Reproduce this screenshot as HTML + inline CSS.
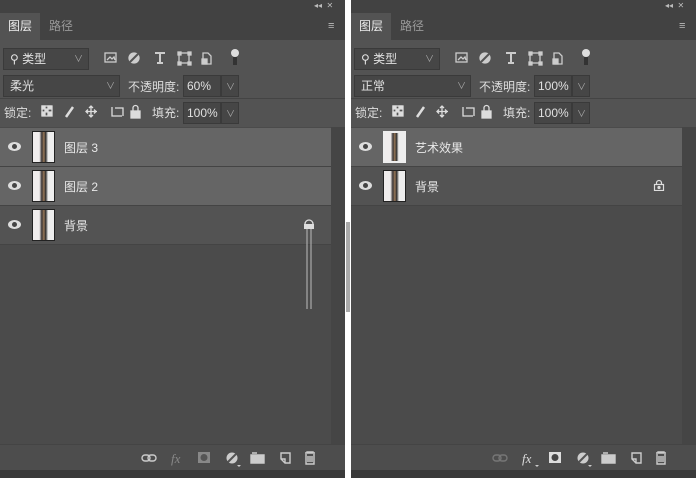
<!DOCTYPE html><html><head><meta charset="utf-8"><style>
*{margin:0;padding:0;box-sizing:border-box}
body{width:696px;height:478px;background:#3c3c3c;position:relative;overflow:hidden;font-family:"Liberation Sans","Noto Sans CJK SC",sans-serif;font-size:12px;color:#ddd}
.p{position:absolute;top:0;width:345px;height:478px;background:#535353}
.a{position:absolute}
.top{left:0;top:0;width:345px;height:13px;background:#424242}
.tabs{left:0;top:13px;width:345px;height:27px;background:#424242}
.tab{top:13px;height:27px;line-height:27px;padding:0 8px}
.box{background:#464646;border:1px solid #3a3a3a;height:22px;line-height:20px;padding-left:6px;color:#e0e0e0}
.chev{color:#aaa;font-size:9px}
.list{left:0;top:127px;width:331px;height:317px;background:#4b4b4b}
.sb{left:331px;top:127px;width:14px;height:317px;background:#454545}
.row{left:0;width:331px;height:39px;border-bottom:1px solid #444}
.sel{background:#656565}
.norm{background:#535353}
.eye{left:8px;top:14px;width:13px;height:9px;border-radius:50%;background:#ddd}
.eye:after{content:"";position:absolute;left:4px;top:2px;width:5px;height:5px;border-radius:50%;background:#444}
.th{left:32px;top:3px;width:23px;height:32px;background:linear-gradient(90deg,#f0eded 30%,#3a3535 42%,#9a7a5a 52%,#2a2a2a 60%,#eee 72%);border:1px solid #222}
.nm{left:64px;top:11px;color:#e8e8e8;font-size:12px}
.bot{left:0;top:444px;width:345px;height:26px;background:#4d4d4d;border-top:1px solid #444}
.bl{left:0;top:470px;width:345px;height:8px;background:#3a3a3a}
svg{position:absolute}
</style></head><body>

<!-- LEFT -->
<div class="p" style="left:0">
<div class="a top"></div><div class="a" style="left:314px;top:1px;color:#bbb;font-size:8px">◂◂ &nbsp;✕</div>
<div class="a tabs"></div>
<div class="a tab" style="left:0;width:40px;background:#535353;color:#eee">图层</div>
<div class="a tab" style="left:41px;color:#999">路径</div>
<div class="a" style="left:328px;top:20px;color:#bbb;font-size:11px">≡</div>
<div class="a box" style="left:3px;top:48px;width:86px">⚲ 类型<span class="a chev" style="left:70px">∨</span></div>
<svg style="left:100px;top:48px" width="145" height="20" fill="none" stroke="#ccc" stroke-width="1.3">
<rect x="5" y="5" width="11" height="9"/><path d="M7 12l3-3 2 2 2-2 1 3" />
<circle cx="34" cy="10" r="5" fill="#ccc"/><path d="M30 14l8-8" stroke="#535353" stroke-width="2"/>
<path d="M55 5h10M60 5v10M57 15h6" stroke-width="2"/>
<rect x="79" y="5" width="10" height="10"/><rect x="78" y="4" width="3" height="3" fill="#ccc"/><rect x="88" y="4" width="3" height="3" fill="#ccc"/><rect x="78" y="14" width="3" height="3" fill="#ccc"/><rect x="88" y="14" width="3" height="3" fill="#ccc"/>
<path d="M103 5h5l3 3v8h-8z"/><rect x="102" y="11" width="5" height="5" fill="#ccc"/>
<circle cx="135" cy="5" r="4" fill="#ddd" stroke="none"/><rect x="133" y="9" width="4" height="8" fill="#333" stroke="none"/>
</svg>
<div class="a box" style="left:3px;top:75px;width:117px">柔光<span class="a chev" style="left:102px">∨</span></div>
<div class="a" style="left:128px;top:78px">不透明度:</div>
<div class="a box" style="left:183px;top:75px;width:38px;padding-left:3px">60%</div>
<div class="a box" style="left:221px;top:75px;width:18px;padding-left:4px"><span class="chev">∨</span></div>
<div class="a" style="left:0;top:98px;width:345px;height:1px;background:#444"></div>
<div class="a" style="left:4px;top:104px">锁定:</div>
<svg style="left:30px;top:103px" width="120" height="20" fill="none" stroke="#ddd" stroke-width="1.3">
<rect x="12" y="3" width="10" height="10"/><path d="M12 3h3v3h-3zM18 3h3v3h-3zM15 6h3v3h-3zM12 9h3v3h-3zM18 9h3v3h-3z" fill="#ddd"/>
<path d="M36 14l7-10" stroke-width="2.5"/>
<path d="M61 3v11M56 8.5h11M59 5l2-2 2 2M59 12l2 2 2-2M58 6.5l-2 2 2 2M64 6.5l2 2-2 2"/>
<path d="M82 4v9h10M85 5h8v8"/>
<rect x="101" y="8" width="9" height="7" fill="#ddd"/><path d="M103 8V5a2.5 2.5 0 015 0v3"/>
</svg>
<div class="a" style="left:152px;top:104px">填充:</div>
<div class="a box" style="left:183px;top:102px;width:38px;padding-left:3px">100%</div>
<div class="a box" style="left:221px;top:102px;width:18px;padding-left:4px"><span class="chev">∨</span></div>
<div class="a list"></div><div class="a sb"></div>
<div class="a row sel" style="top:128px"><div class="a eye"></div><div class="a th"></div><div class="a nm">图层 3</div></div>
<div class="a row sel" style="top:167px"><div class="a eye"></div><div class="a th"></div><div class="a nm">图层 2</div></div>
<div class="a row norm" style="top:206px"><div class="a eye"></div><div class="a th"></div><div class="a nm">背景</div></div>
<svg style="left:302px;top:218px" width="14" height="92"><path d="M3 6a4 4 0 018 0" stroke="#ddd" fill="none" stroke-width="1.3"/><rect x="2" y="6" width="10" height="5" fill="#ddd"/><rect x="4" y="11" width="2" height="80" fill="#aaa" opacity=".6"/><rect x="8" y="11" width="2" height="80" fill="#aaa" opacity=".6"/></svg>
<div class="a bot"></div><div class="a bl"></div>
<svg style="left:138px;top:448px" width="190" height="20" fill="none" stroke="#ccc" stroke-width="1.4">
<rect x="4" y="7" width="8" height="6" rx="3"/><rect x="10" y="7" width="8" height="6" rx="3"/>
<text x="33" y="15" fill="#888" stroke="none" font-size="13" font-style="italic" font-family="Liberation Serif">fx</text>
<rect x="60" y="4" width="12" height="11" fill="#888" stroke="none"/><circle cx="66" cy="9.5" r="3.5" fill="#555" stroke="none"/>
<circle cx="94" cy="10" r="5.5" fill="#ccc" stroke="none"/><path d="M90 14l8-8" stroke="#535353" stroke-width="2"/><path d="M99 17l2 2 2-2z" fill="#ccc" stroke="none"/>
<path d="M114 5h5M113 7h13v8h-13z" fill="#ccc"/>
<path d="M143 5h9v10h-5l-4-4z"/><path d="M143 11h4v4"/>
<path d="M167 5h10M169 5v-1h6v1M168 6v10h8V6M170 8v6M172 8v6M174 8v6"/>
</svg>
</div>

<div class="a" style="left:345px;top:0;width:6px;height:478px;background:#fff"></div>
<div class="a" style="left:346px;top:222px;width:4px;height:90px;background:#aaa"></div>

<!-- RIGHT -->
<div class="p" style="left:351px">
<div class="a top"></div><div class="a" style="left:314px;top:1px;color:#bbb;font-size:8px">◂◂ &nbsp;✕</div>
<div class="a tabs"></div>
<div class="a tab" style="left:0;width:40px;background:#535353;color:#eee">图层</div>
<div class="a tab" style="left:41px;color:#999">路径</div>
<div class="a" style="left:328px;top:20px;color:#bbb;font-size:11px">≡</div>
<div class="a box" style="left:3px;top:48px;width:86px">⚲ 类型<span class="a chev" style="left:70px">∨</span></div>
<svg style="left:100px;top:48px" width="145" height="20" fill="none" stroke="#ccc" stroke-width="1.3">
<rect x="5" y="5" width="11" height="9"/><path d="M7 12l3-3 2 2 2-2 1 3" />
<circle cx="34" cy="10" r="5" fill="#ccc"/><path d="M30 14l8-8" stroke="#535353" stroke-width="2"/>
<path d="M55 5h10M60 5v10M57 15h6" stroke-width="2"/>
<rect x="79" y="5" width="10" height="10"/><rect x="78" y="4" width="3" height="3" fill="#ccc"/><rect x="88" y="4" width="3" height="3" fill="#ccc"/><rect x="78" y="14" width="3" height="3" fill="#ccc"/><rect x="88" y="14" width="3" height="3" fill="#ccc"/>
<path d="M103 5h5l3 3v8h-8z"/><rect x="102" y="11" width="5" height="5" fill="#ccc"/>
<circle cx="135" cy="5" r="4" fill="#ddd" stroke="none"/><rect x="133" y="9" width="4" height="8" fill="#333" stroke="none"/>
</svg>
<div class="a box" style="left:3px;top:75px;width:117px">正常<span class="a chev" style="left:102px">∨</span></div>
<div class="a" style="left:128px;top:78px">不透明度:</div>
<div class="a box" style="left:183px;top:75px;width:38px;padding-left:3px">100%</div>
<div class="a box" style="left:221px;top:75px;width:18px;padding-left:4px"><span class="chev">∨</span></div>
<div class="a" style="left:0;top:98px;width:345px;height:1px;background:#444"></div>
<div class="a" style="left:4px;top:104px">锁定:</div>
<svg style="left:30px;top:103px" width="120" height="20" fill="none" stroke="#ddd" stroke-width="1.3">
<rect x="12" y="3" width="10" height="10"/><path d="M12 3h3v3h-3zM18 3h3v3h-3zM15 6h3v3h-3zM12 9h3v3h-3zM18 9h3v3h-3z" fill="#ddd"/>
<path d="M36 14l7-10" stroke-width="2.5"/>
<path d="M61 3v11M56 8.5h11M59 5l2-2 2 2M59 12l2 2 2-2M58 6.5l-2 2 2 2M64 6.5l2 2-2 2"/>
<path d="M82 4v9h10M85 5h8v8"/>
<rect x="101" y="8" width="9" height="7" fill="#ddd"/><path d="M103 8V5a2.5 2.5 0 015 0v3"/>
</svg>
<div class="a" style="left:152px;top:104px">填充:</div>
<div class="a box" style="left:183px;top:102px;width:38px;padding-left:3px">100%</div>
<div class="a box" style="left:221px;top:102px;width:18px;padding-left:4px"><span class="chev">∨</span></div>
<div class="a list"></div><div class="a sb"></div>
<div class="a row sel" style="top:128px"><div class="a eye"></div><div class="a th" style="border:2px solid #eee"></div><div class="a nm">艺术效果</div></div>
<div class="a row norm" style="top:167px"><div class="a eye"></div><div class="a th"></div><div class="a nm">背景</div>
<svg style="left:302px;top:12px" width="12" height="12" fill="none" stroke="#ddd" stroke-width="1.2"><rect x="1.5" y="5.5" width="9" height="6"/><path d="M3.5 5.5V4a2.5 2.5 0 015 0v1.5"/><circle cx="6" cy="8.5" r="1" fill="#ddd"/></svg></div>
<div class="a bot"></div><div class="a bl"></div>
<svg style="left:138px;top:448px" width="190" height="20" fill="none" stroke="#ccc" stroke-width="1.4">
<g stroke="#777"><rect x="4" y="7" width="8" height="6" rx="3"/><rect x="10" y="7" width="8" height="6" rx="3"/></g>
<text x="33" y="15" fill="#ddd" stroke="none" font-size="13" font-style="italic" font-family="Liberation Serif">fx</text><path d="M46 17l2 2 2-2z" fill="#ccc" stroke="none"/>
<rect x="60" y="4" width="12" height="11" fill="#ddd" stroke="none"/><circle cx="66" cy="9.5" r="3.5" fill="#444" stroke="none"/>
<circle cx="94" cy="10" r="5.5" fill="#ccc" stroke="none"/><path d="M90 14l8-8" stroke="#535353" stroke-width="2"/><path d="M99 17l2 2 2-2z" fill="#ccc" stroke="none"/>
<path d="M114 5h5M113 7h13v8h-13z" fill="#ccc"/>
<path d="M143 5h9v10h-5l-4-4z"/><path d="M143 11h4v4"/>
<path d="M167 5h10M169 5v-1h6v1M168 6v10h8V6M170 8v6M172 8v6M174 8v6"/>
</svg>
</div>
</body></html>
